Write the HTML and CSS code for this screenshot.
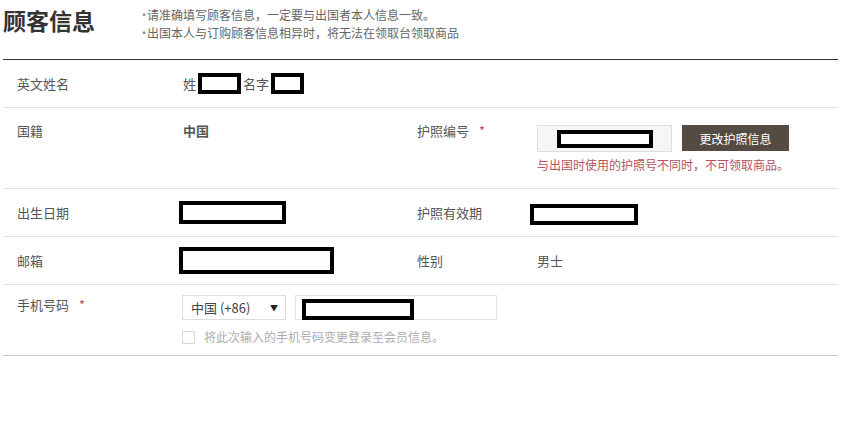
FILE: index.html
```html
<!DOCTYPE html>
<html lang="zh-CN">
<head>
<meta charset="utf-8">
<title>顾客信息</title>
<link rel="stylesheet" href="styles.css">
</head>
<body>
<div class="page">
  <div class="header">
    <h1 class="title">顾客信息</h1>
    <ul class="notes">
      <li>请准确填写顾客信息，一定要与出国者本人信息一致。</li>
      <li>出国本人与订购顾客信息相异时，将无法在领取台领取商品</li>
    </ul>
  </div>
  <div class="table">
    <div class="row row-center">
      <div class="label">英文姓名</div>
      <div class="value name-value">
        <span class="txt">姓</span><span class="redact r-last"></span><span class="txt">名字</span><span class="redact r-first"></span>
      </div>
    </div>
    <div class="row row-top row-passport">
      <div class="label">国籍</div>
      <div class="value"><span class="txt bold">中国</span></div>
      <div class="label label2">护照编号<span class="req">*</span></div>
      <div class="value value2">
        <div class="passport-line">
          <div class="passport-input"><span class="redact r-passport"></span></div>
          <button class="btn">更改护照信息</button>
        </div>
        <div class="error">与出国时使用的护照号不同时，不可领取商品。</div>
      </div>
    </div>
    <div class="row row-center">
      <div class="label">出生日期</div>
      <div class="value"><span class="redact r-birth"></span></div>
      <div class="label label2">护照有效期</div>
      <div class="value"><span class="redact r-expire"></span></div>
    </div>
    <div class="row row-center">
      <div class="label">邮箱</div>
      <div class="value"><span class="redact r-mail"></span></div>
      <div class="label label2">性别</div>
      <div class="value value2"><span class="txt">男士</span></div>
    </div>
    <div class="row row-top row-phone">
      <div class="label">手机号码<span class="req">*</span></div>
      <div class="value phone-value">
        <div class="phone-line">
          <div class="select"><span>中国 (+86)</span><span class="arrow">▼</span></div>
          <div class="phone-input"><span class="redact r-phone"></span></div>
        </div>
        <label class="check-line"><span class="checkbox"></span><span>将此次输入的手机号码变更登录至会员信息。</span></label>
      </div>
    </div>
  </div>
</div>
</body>
</html>
```

FILE: styles.css
```css
* { box-sizing: border-box; }
html, body { margin: 0; padding: 0; background: #fff; }
body {
  font-family: "Noto Sans CJK SC", "Noto Sans", "Liberation Sans", sans-serif;
  color: #555;
  font-size: 13px;
}
.page { width: 846px; height: 421px; padding-left: 3px; }
.header { height: 59px; display: flex; align-items: flex-start; }
.title {
  margin: 6px 0 0 0;
  font-size: 23px;
  line-height: 28px;
  font-weight: 700;
  color: #333;
  width: 135px;
}
.notes {
  list-style: none;
  margin: 6px 0 0 0;
  padding: 0;
  font-size: 12px;
  line-height: 18px;
  color: #666;
}
.notes li { position: relative; padding-left: 9px; }
.notes li::before {
  content: "·";
  position: absolute;
  left: 0;
  top: 0;
  color: #888;
}
.table {
  width: 835px;
  border-top: 1px solid #333;
  border-bottom: 1px solid #c9c9c9;
}
.row {
  display: grid;
  grid-template-columns: 176px 238px 113px 1fr;
  border-bottom: 1px solid #e2e2e2;
}
.row:last-child { border-bottom: none; }
.row-center { height: 48px; align-items: center; }
.row-top { align-items: start; }
.label { padding-left: 14px; line-height: 20px; color: #555; white-space: nowrap; }
.label2 { padding-left: 0; }
.req { color: #c2505c; margin-left: 10px; font-size: 13px; }
.value { line-height: 20px; display: flex; align-items: center; white-space: nowrap; }
.txt { padding-left: 4px; }
.value2 { padding-left: 7px; }
.value2 .txt { padding-left: 0; }
.bold { font-weight: 700; }
.redact {
  display: inline-block;
  border: 4px solid #000;
  background: #fff;
}
.name-value .txt:first-child { padding-right: 2px; }
.name-value .txt { padding-left: 4px; padding-right: 2px; }
.name-value .txt:nth-child(3) { padding-left: 2px; }
.r-last { width: 43px; height: 21px; }
.r-first { width: 33px; height: 21px; }
.r-birth { width: 107px; height: 23px; }
.r-expire { width: 108px; height: 21px; margin-top: 3px; }
.r-mail { width: 155px; height: 27px; }

.row-passport { height: 81px; padding-top: 13px; }
.row-passport .value2 { flex-direction: column; align-items: flex-start; padding-top: 4px; }
.passport-line { display: flex; align-items: flex-start; }
.passport-input {
  width: 135px;
  height: 27px;
  background: #f6f6f8;
  border: 1px solid #dedede;
  display: flex;
  align-items: center;
  padding-left: 19px;
}
.r-passport { width: 96px; height: 18px; }
.btn {
  margin-left: 10px;
  width: 107px;
  height: 26px;
  border: none;
  background: #544b43;
  color: #fff;
  font-family: inherit;
  font-size: 12px;
  padding: 0;
  cursor: pointer;
}
.error {
  margin-top: 4px;
  font-size: 12px;
  line-height: 18px;
  color: #b5535e;
}

.row-phone { height: 70px; padding-top: 10px; }
.phone-value { flex-direction: column; align-items: flex-start; padding-left: 3px; }
.phone-line { display: flex; }
.select {
  width: 104px;
  height: 25px;
  border: 1px solid #dcdcdc;
  display: flex;
  align-items: center;
  justify-content: space-between;
  padding: 0 7px 0 8px;
  font-size: 13px;
  color: #444;
}
.arrow { font-size: 8px; color: #222; }
.phone-input {
  margin-left: 9px;
  width: 202px;
  height: 25px;
  border: 1px solid #e3e3e3;
  padding: 3px 0 0 6px;
}
.r-phone { display: block; width: 112px; height: 21px; }
.check-line {
  margin-top: 8px;
  display: flex;
  align-items: center;
  font-size: 12px;
  line-height: 18px;
  color: #adadad;
  white-space: nowrap;
}
.checkbox {
  flex: none;
  width: 13px;
  height: 13px;
  border: 1px solid #dadada;
  margin-right: 9px;
  background: #fff;
}
```
